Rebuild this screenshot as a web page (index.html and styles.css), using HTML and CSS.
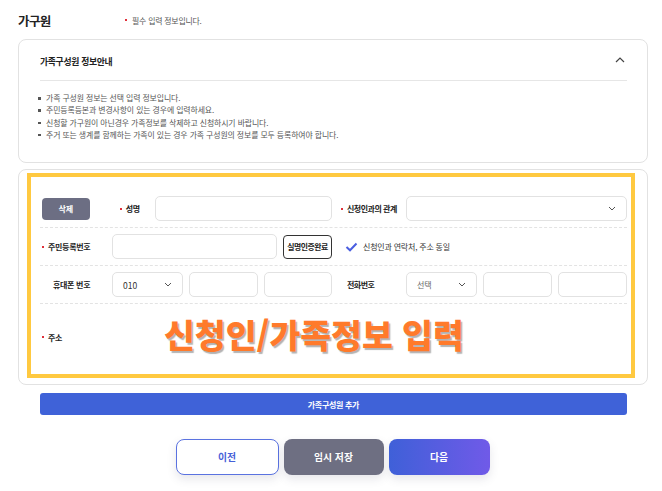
FILE: index.html
```html
<!DOCTYPE html>
<html lang="ko">
<head>
<meta charset="utf-8">
<link rel="stylesheet" href="styles.css">
</head>
<body>
<div class="page">
  <div class="head">
    <h1 class="title">가구원</h1>
    <p class="req-note"><span class="dot"></span>필수 입력 정보입니다.</p>
  </div>

  <section class="card info">
    <div class="info-head">
      <h2>가족구성원 정보안내</h2>
      <svg class="chev-up" width="10" height="6" viewBox="0 0 10 6"><path d="M1 5 L5 1 L9 5" fill="none" stroke="#444" stroke-width="1.2"/></svg>
    </div>
    <ul class="info-list">
      <li>가족 구성원 정보는 선택 입력 정보입니다.</li>
      <li>주민등록등본과 변경사항이 있는 경우에 입력하세요.</li>
      <li>신청할 가구원이 아닌경우 가족정보를 삭제하고 신청하시기 바랍니다.</li>
      <li>주거 또는 생계를 함께하는 가족이 있는 경우 가족 구성원의 정보를 모두 등록하여야 합니다.</li>
    </ul>
  </section>

  <section class="card form-card">
    <div class="highlight">
      <div class="row">
        <div class="half-left">
          <button class="btn-del">삭제</button>
          <span class="label req lbl-name">성명</span>
          <span class="input w-name"></span>
        </div>
        <div class="half-right">
          <span class="label req lbl-right">신청인과의 관계</span>
          <span class="input select w-rel"><span></span><svg class="chev" width="8" height="5" viewBox="0 0 8 5"><path d="M1 1 L4 4 L7 1" fill="none" stroke="#555" stroke-width="1"/></svg></span>
        </div>
      </div>
      <div class="row">
        <div class="half-left">
          <span class="label req lbl-col">주민등록번호</span>
          <span class="input w-rrn"></span>
          <button class="btn-verify">실명인증완료</button>
        </div>
        <div class="half-right">
          <label class="check">
            <svg width="13" height="10" viewBox="0 0 13 10"><path d="M1.5 5 L5 8.3 L11.5 1.5" fill="none" stroke="#4a5ee0" stroke-width="2"/></svg>
            <span>신청인과 연락처, 주소 동일</span>
          </label>
        </div>
      </div>
      <div class="row">
        <div class="half-left">
          <span class="label lbl-col lbl-phone">휴대폰 번호</span>
          <span class="input select w-sel"><span class="val">010</span><svg class="chev" width="8" height="5" viewBox="0 0 8 5"><path d="M1 1 L4 4 L7 1" fill="none" stroke="#555" stroke-width="1"/></svg></span>
          <span class="input w-num"></span>
          <span class="input w-num2"></span>
        </div>
        <div class="half-right">
          <span class="label lbl-right lbl-tel">전화번호</span>
          <span class="input select w-sel"><span class="val muted">선택</span><svg class="chev" width="8" height="5" viewBox="0 0 8 5"><path d="M1 1 L4 4 L7 1" fill="none" stroke="#555" stroke-width="1"/></svg></span>
          <span class="input w-num"></span>
          <span class="input w-num"></span>
        </div>
      </div>
      <div class="row row-addr">
        <span class="label req lbl-col">주소</span>
        <span class="annot">신청인/가족정보 입력</span>
      </div>
    </div>
  </section>

  <button class="btn-add">가족구성원 추가</button>

  <div class="actions">
    <button class="btn-act prev">이전</button>
    <button class="btn-act save">임시 저장</button>
    <button class="btn-act next">다음</button>
  </div>
</div>
</body>
</html>
```

FILE: styles.css
```css
* { box-sizing: border-box; }
html, body { margin: 0; padding: 0; background: #fff; }
body {
  font-family: "Noto Sans CJK KR", "Noto Sans", sans-serif;
  color: #222;
  width: 662px;
  height: 491px;
  overflow: hidden;
}
.page { padding: 8px 14px 0 18px; }

.head { display: flex; align-items: center; height: 24px; }
.title { margin: 0; font-size: 12.5px; font-weight: 700; letter-spacing: -0.6px; width: 107px; color: #222; }
.req-note { margin: 0; font-size: 7.9px; color: #555; display: flex; align-items: center; letter-spacing: -0.2px; }
.dot { display: inline-block; width: 2px; height: 2px; background: #e0303a; margin-right: 5px; }

.card { border: 1px solid #e2e2e2; border-radius: 8px; background: #fff; }

.info { margin-top: 7px; height: 124px; padding: 0 20px 0 21px; }
.info-head { display: flex; justify-content: space-between; align-items: center; height: 41px; border-bottom: 1px solid #e6e6e6; }
.info-head h2 { margin: 0; font-size: 8.8px; font-weight: 700; letter-spacing: -0.3px; color: #222; padding-top: 2px; }
.chev-up { margin-right: 2px; }
.info-list { list-style: none; margin: 0; padding: 11px 0 0 0; }
.info-list li { font-size: 7.9px; line-height: 12.3px; color: #555; letter-spacing: -0.1px; position: relative; padding-left: 8px; margin-left: -2px; }
.info-list li::before { content: ""; position: absolute; left: 0; top: 5px; width: 2.5px; height: 2.5px; background: #555; }

.form-card { margin-top: 6px; height: 216px; padding: 3px 12px 6px 8px; }
.highlight { border: 4px solid #ffc940; height: 205px; padding: 13px 4px 0 9px; }

.row { display: flex; gap: 9px; padding: 6px 0; border-bottom: 1px dashed #e3e3e3; height: 38px; align-items: center; }
.half-left { width: 292px; display: flex; align-items: center; gap: 6px; height: 25px; }
.half-right { width: 286px; display: flex; align-items: center; height: 25px; }

.label { font-size: 8px; font-weight: 700; color: #222; letter-spacing: -0.3px; display: inline-flex; align-items: center; white-space: nowrap; }
.label.req::before { content: ""; display: inline-block; width: 2px; height: 2px; background: #e0303a; margin-right: 4px; }
.lbl-col { width: 66px; padding-left: 2px; }
.lbl-phone { padding-left: 13px; }
.lbl-name { margin-left: 24px; width: 30px; }
.lbl-right { width: 65px; letter-spacing: -0.5px; }
.lbl-tel { padding-left: 6px; }

.input { display: flex; align-items: center; height: 25px; border: 1px solid #e2e2e2; border-radius: 5px; background: #fff; }
.select { justify-content: space-between; padding: 0 10px 0 10px; }
.val { font-size: 8.5px; color: #333; }
.val.muted { color: #666; font-size: 8px; }
.chev { display: block; }
.w-name { width: 178px; margin-left: auto; }
.w-rel { width: 221px; }
.w-rrn { width: 165px; }
.w-sel { width: 71px; }
.w-num { width: 69px; }
.w-num2 { width: 68px; }
.half-right .input + .input, .half-right .select + .input { margin-left: 6px; }

button { font-family: inherit; cursor: pointer; }
.btn-del { margin-left: 2px; width: 48px; height: 22px; border: none; border-radius: 4px; background: #6c6e83; color: #fff; font-size: 8px; font-weight: 700; }
.btn-verify { width: 49px; height: 24px; border: 1px solid #333; border-radius: 4px; background: #fff; color: #222; font-size: 7.9px; font-weight: 700; padding: 0; letter-spacing: -0.5px; }

.check { display: flex; align-items: center; margin-left: 4px; gap: 5px; font-size: 8px; color: #333; letter-spacing: -0.2px; }

.row-addr { border-bottom: none; height: 70px; padding: 0; gap: 0; }
.row-addr .lbl-col { margin-top: -4px; }
.annot { margin-left: 58px; font-size: 33.5px; font-weight: 800; color: #ff7a2b; letter-spacing: 0; text-shadow: 1.5px 1.5px 1px rgba(0,0,0,0.3); line-height: 1; margin-top: -10px; }

.btn-add { display: block; margin: 8px 0 0 22px; width: 587px; height: 22px; border: none; border-radius: 3px; background: #3f62d8; color: #fff; font-size: 8px; font-weight: 700; letter-spacing: -0.3px; }

.actions { display: flex; justify-content: center; gap: 5px; margin-top: 24px; padding-right: 1px; }
.btn-act { height: 36px; border-radius: 8px; font-size: 9.8px; font-weight: 700; box-shadow: 0 4px 10px rgba(60,60,90,0.13); }
.prev { width: 103px; background: #fff; border: 1px solid #5a72e0; color: #4560d8; }
.save { width: 100px; background: #6e6f82; border: none; color: #fff; }
.next { width: 101px; background: linear-gradient(to right, #3f60d8, #705ae8); border: none; color: #fff; }
```
